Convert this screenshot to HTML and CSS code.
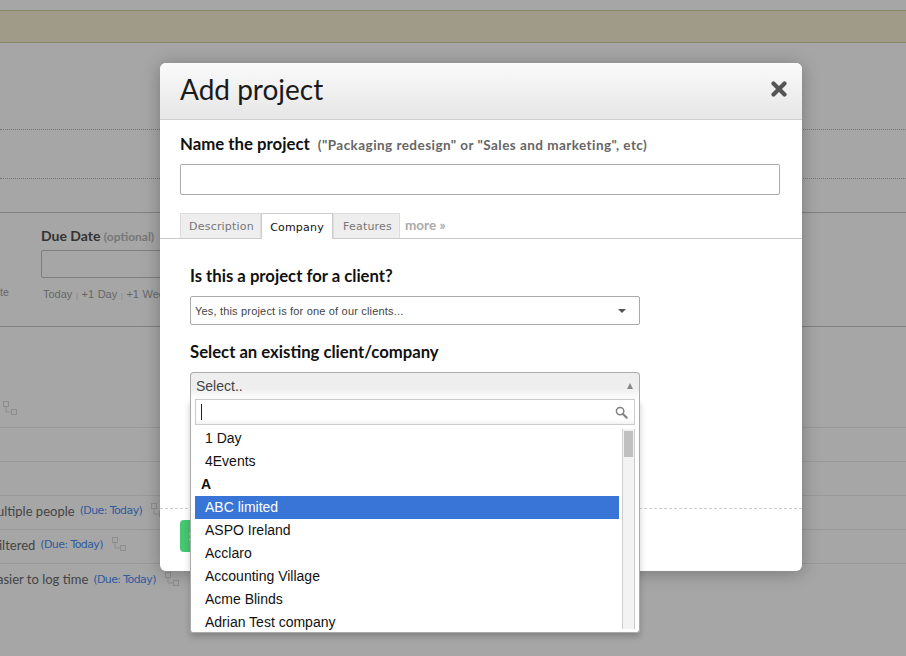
FILE: index.html
```html
<!DOCTYPE html>
<html lang="en">
<head>
<meta charset="utf-8">
<title>Add project</title>
<link rel="stylesheet" href="styles.css">
</head>
<body>
<div class="page">
  <div class="banner"></div>
  <div class="dotted dotted-first"></div>
  <div class="dotted dotted-second"></div>
  <section class="form-band">
    <div class="due">
      <div class="stub">te</div>
      <div class="due-field">
        <div class="due-label">Due Date <span class="optional">(optional)</span></div>
        <div class="due-input"></div>
        <div class="due-links">Today <i>|</i> +1 Day <i>|</i> +1 Week</div>
      </div>
    </div>
  </section>
  <ul class="rows">
    <li class="row"><svg class="tree tree-alone" viewBox="0 0 15 15"><use href="#tree"/></svg></li>
    <li class="row"></li>
    <li class="row"></li>
    <li class="row row-a"><span class="task">ultiple people</span><span class="duedate">(Due: Today)</span><svg class="tree" viewBox="0 0 15 15"><use href="#tree"/></svg></li>
    <li class="row row-b"><span class="task">iltered</span><span class="duedate">(Due: Today)</span><svg class="tree" viewBox="0 0 15 15"><use href="#tree"/></svg></li>
    <li class="row row-c"><span class="task">asier to log time</span><span class="duedate">(Due: Today)</span><svg class="tree" viewBox="0 0 15 15"><use href="#tree"/></svg></li>
  </ul>

  <svg class="defs" width="0" height="0">
    <symbol id="tree" viewBox="0 0 15 15">
      <g fill="none" stroke="#8e8e8e" stroke-width="1">
        <rect x="0.5" y="0.5" width="5" height="5"/>
        <rect x="8.5" y="8.5" width="5" height="5"/>
        <path d="M3 6v5h5"/>
      </g>
    </symbol>
  </svg>

  <div class="modal">
    <header class="modal-head">
      <h1 class="modal-title">Add project</h1>
      <svg class="close" viewBox="0 0 16 16"><path d="M2.5 2.5l11 11M13.5 2.5l-11 11" stroke="#555" stroke-width="4.2" stroke-linecap="round" fill="none"/></svg>
    </header>
    <div class="name-block">
      <div class="name-label"><strong>Name the project</strong><span class="hint">("Packaging redesign" or "Sales and marketing", etc)</span></div>
      <div class="text-input"></div>
    </div>
    <nav class="tabs">
      <span class="tab tab-description">Description</span>
      <span class="tab tab-active">Company</span>
      <span class="tab tab-features">Features</span>
      <span class="more">more »</span>
    </nav>
    <div class="panel">
      <h2 class="field-title">Is this a project for a client?</h2>
      <div class="native-select">
        <span>Yes, this project is for one of our clients...</span>
        <span class="caret"></span>
      </div>
      <h2 class="field-title field-title-second">Select an existing client/company</h2>
      <div class="chosen">
        <div class="chosen-head"><span>Select..</span><span class="caret-up"></span></div>
        <div class="chosen-drop">
          <div class="search">
            <span class="cursor"></span>
            <svg class="magnifier" viewBox="0 0 14 14"><circle cx="5.5" cy="5.5" r="4" fill="none" stroke="#808080" stroke-width="1.6"/><path d="M8.6 8.6l4 4" stroke="#808080" stroke-width="2.2" stroke-linecap="round"/></svg>
          </div>
          <div class="results">
            <ul class="result-list">
              <li class="item">1 Day</li>
              <li class="item">4Events</li>
              <li class="item group">A</li>
              <li class="item selected">ABC limited</li>
              <li class="item">ASPO Ireland</li>
              <li class="item">Acclaro</li>
              <li class="item">Accounting Village</li>
              <li class="item">Acme Blinds</li>
              <li class="item">Adrian Test company</li>
            </ul>
            <div class="scrollbar"><div class="thumb"></div></div>
          </div>
        </div>
      </div>
    </div>
    <footer class="modal-foot">
      <span class="save">Save</span>
    </footer>
  </div>
</div>
</body>
</html>
```
FILE: styles.css
```css
* { box-sizing: border-box; }
html, body { margin: 0; padding: 0; }
body { background: #a5a5a5; font-family: "Liberation Sans", Arial, sans-serif; }
h1, h2, ul { margin: 0; padding: 0; }
ul { list-style: none; }

.page { position: relative; width: 906px; height: 656px; overflow: hidden; background: #a6a6a6; padding-top: 10px; }
.defs { display: block; height: 0; }

.banner { height: 33px; background: #a09a89; border-top: 1px solid #8b8663; border-bottom: 1px solid #8b8663; }
.dotted { height: 1px; border-top: 1px dotted #777; }
.dotted-first { margin-top: 86px; }
.dotted-second { margin-top: 48px; }

.form-band { margin-top: 33px; height: 115px; border-top: 1px solid #808080; border-bottom: 1px solid #808080; }
.due { position: relative; display: flex; padding-top: 14px; }
.stub { width: 41px; padding-top: 59px; font: 10.5px "Liberation Sans", sans-serif; color: #666; }
.due-label { font: bold 14px/17px Lato, sans-serif; color: #333; white-space: nowrap; }
.optional { font-size: 12px; color: #777; }
.due-input { width: 140px; height: 28px; margin-top: 5px; border: 1px solid #7d7d7d; border-radius: 2px; }
.due-links { margin: 10px 0 0 2px; font: 11px/13px "Liberation Sans", sans-serif; color: #666; white-space: nowrap; word-spacing: 0.5px; }
.due-links i { font-style: normal; font-size: 8px; color: #888; }

.rows { margin-top: 67px; }
.row { display: flex; align-items: center; height: 34px; padding-bottom: 4px; border-bottom: 1px solid #999; white-space: nowrap; }
.row:last-child { border-bottom: 0; }
.task { font: 13px Lato, sans-serif; color: #444; }
.duedate { margin-left: 5px; font: 11px "DejaVu Sans", sans-serif; color: #2f5a9e; letter-spacing: -0.6px; }
.tree { display: block; width: 15px; height: 15px; margin: 0 0 0 9px; }
.tree-alone { margin: -1px 0 0 3px; }
.row-a .task { margin-left: -3px; }
.row-b .task { margin-left: -1px; }
.row-c .task { margin-left: -3px; }

.modal { position: absolute; left: 160px; top: 63px; width: 642px; height: 508px; display: flex; flex-direction: column; background: #fff; border-radius: 6px; box-shadow: 0 2px 18px rgba(0, 0, 0, .28); }
.modal-head { display: flex; justify-content: space-between; align-items: center; height: 57px; padding: 0 15px 0 20px; background: linear-gradient(#fafafa, #e6e6e6); border-bottom: 1px solid #cfcfcf; border-radius: 6px 6px 0 0; }
.modal-title { margin-bottom: 4px; font: 400 28px/1 Lato, sans-serif; color: #1a1a1a; }
.close { width: 16px; height: 16px; margin-bottom: 5px; }

.name-block { padding: 14px 22px 0 20px; }
.name-label { display: flex; align-items: baseline; height: 20px; }
.name-label strong { font: bold 16.8px/20px Lato, sans-serif; color: #111; }
.hint { margin-left: 8px; font: bold 13.5px/20px Lato, sans-serif; letter-spacing: 0.45px; color: #666; white-space: nowrap; }
.text-input { height: 31px; margin-top: 10px; border: 1px solid #aaa; border-radius: 2px; }

.tabs { display: flex; align-items: flex-start; height: 44px; padding: 18px 0 0 20px; border-bottom: 1px solid #ccc; }
.tab { display: block; height: 25px; padding-top: 6px; text-align: center; font: 11px/13px "DejaVu Sans", sans-serif; letter-spacing: 0.2px; color: #777; background: #eee; border: 1px solid #ddd; border-bottom: 0; }
.tab-description { width: 81px; padding-left: 2px; }
.tab-active { width: 72px; height: 26px; padding-top: 7px; color: #111; background: #fff; border-color: #ccc; position: relative; z-index: 1; }
.tab-features { width: 67px; padding-left: 2px; }
.more { margin-left: 5px; padding-top: 5px; font: bold 13.5px/15px Lato, sans-serif; color: #aaa; }

.panel { flex: 1; padding: 27px 30px 0; }
.field-title { height: 20px; font: bold 16.7px/20px Lato, sans-serif; color: #111; }
.field-title-second { margin-top: 17px; }
.native-select { display: flex; justify-content: space-between; align-items: center; width: 450px; height: 29px; margin-top: 10px; padding: 0 13px 0 4px; font-size: 11px; letter-spacing: 0.18px; color: #444; border: 1px solid #aaa; border-radius: 2px; }
.caret { width: 0; height: 0; border: 4px solid transparent; border-top: 4px solid #555; border-bottom: 0; }

.chosen { position: relative; width: 450px; margin-top: 10px; }
.chosen-head { display: flex; justify-content: space-between; align-items: center; height: 27px; padding: 0 6px 0 5px; font-size: 14px; color: #444; background: linear-gradient(#eee 60%, #fff); border: 1px solid #aaa; border-bottom: 0; border-radius: 4px 4px 0 0; }
.caret-up { width: 0; height: 0; border: 3.5px solid transparent; border-bottom: 6px solid #888; border-top: 0; }
.chosen-drop { position: absolute; left: 0; top: 27px; width: 450px; height: 234px; padding: 0 4px 0 4px; background: #fff; border: 1px solid #aaa; border-top: 0; border-radius: 0 0 3px 3px; box-shadow: 0 4px 6px rgba(0, 0, 0, .2); }
.search { display: flex; justify-content: space-between; align-items: center; height: 26px; padding: 0 6px 0 5px; border: 1px solid #ccc; background: linear-gradient(#fff 80%, #f2f2f2); }
.cursor { width: 1px; height: 16px; background: #222; }
.magnifier { width: 13px; height: 13px; }

.results { display: flex; justify-content: space-between; padding-top: 2px; height: 207px; }
.result-list { width: 424px; height: 205px; overflow: hidden; }
.item { height: 23px; padding-left: 10px; font-size: 14px; line-height: 23px; color: #111; white-space: nowrap; }
.group { padding-left: 6px; font-weight: bold; }
.selected { color: #fff; background: #3875d7; }
.scrollbar { width: 13px; height: 200px; margin-top: 2px; padding: 2px 1px 0 1px; background: #f3f3f3; border-left: 1px solid #ccc; border-right: 1px solid #ccc; }
.thumb { height: 26px; background: #c0c0c0; }

.modal-foot { height: 63px; padding: 11px 20px 0; border-top: 1px dashed #ccc; }
.save { display: block; width: 120px; height: 32px; padding-left: 9px; font: bold 14px/32px Lato, sans-serif; color: #fff; background: #45c670; border-radius: 4px; }
```
